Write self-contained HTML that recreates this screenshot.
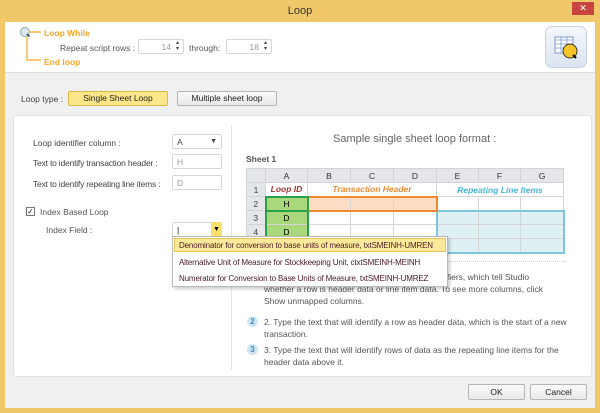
<!DOCTYPE html>
<html><head><style>
*{box-sizing:border-box;margin:0;padding:0}
body{width:600px;height:413px;background:#f0c86a;font-family:"Liberation Sans",sans-serif;font-size:8.5px;color:#444;position:relative;overflow:hidden}
.a{position:absolute;white-space:nowrap}
.w{white-space:normal}
.inp{position:absolute;background:#fff;border:1px solid #d6d6d6;border-radius:2px;color:#999;font-size:8.5px;padding:2px 4px}
.btn{position:absolute;border:1px solid #b5b5b5;border-radius:2px;background:linear-gradient(#fafafa,#e8e8e8);text-align:center;font-size:8.5px;color:#222}
table{border-collapse:collapse;position:absolute;left:246px;top:168px;font-size:8.5px}
td{border:1px solid #d4d4d4;height:14px;text-align:center;padding:0}
.h td{background:#e4e6ea;color:#333}
.n{background:#e4e6ea;width:19px}
</style></head><body>
<div class="a" style="left:0;top:0;width:600px;height:22px;text-align:center;line-height:22px;font-size:11px;color:#333">Loop</div>
<div class="a" style="left:572px;top:2px;width:22px;height:13px;background:#c7443f;color:#fff;text-align:center;font-size:9px;line-height:13px">✕</div>
<div class="a" style="left:5px;top:22px;width:590px;height:386px;background:#f0f0f0"></div>
<div class="a" style="left:5px;top:22px;width:590px;height:51px;background:#fff;border-bottom:1px solid #ddd"></div>
<svg class="a" style="left:18px;top:24px" width="30" height="40"><path d="M9 10v26h14M12 8h11" stroke="#f5a623" stroke-width="1.2" fill="none"/><circle cx="7" cy="8" r="4.5" fill="#dde6f0" stroke="#8aa" stroke-width="1"/><path d="M9 10l2.5 2.5" stroke="#333" stroke-width="1.5"/></svg>
<div class="a" style="left:44px;top:28px;color:#f5a623;font-weight:bold">Loop While</div>
<div class="a" style="left:44px;top:57px;color:#f5a623;font-weight:bold">End loop</div>
<div class="a" style="left:60px;top:43px;color:#555">Repeat script rows :</div>
<div class="inp" style="left:138px;top:39px;width:46px;height:15px;text-align:right;padding-right:12px">14</div>
<div class="a" style="left:189px;top:43px;color:#555">through:</div>
<div class="inp" style="left:226px;top:39px;width:46px;height:15px;text-align:right;padding-right:12px">18</div>
<div class="a" style="left:176px;top:40px;font-size:6px;line-height:6px">▴<br>▾</div>
<div class="a" style="left:264px;top:40px;font-size:6px;line-height:6px">▴<br>▾</div>
<div class="a" style="left:545px;top:26px;width:42px;height:42px;border:1px solid #c8d4e4;border-radius:7px;background:linear-gradient(#f4f7fb,#dbe4f0)"></div>
<svg class="a" style="left:553px;top:34px" width="28" height="28"><rect x="2" y="3" width="18" height="16" fill="#fff" stroke="#7a9ad0"/><path d="M2 6h18M2 10h18M2 14h18M8 3v16M14 3v16" stroke="#7a9ad0" stroke-width=".8"/><circle cx="17" cy="17" r="7" fill="#f7c52a" stroke="#333"/><path d="M20 21l3 3" stroke="#000" stroke-width="2"/></svg>
<div class="a" style="left:21px;top:94px;color:#444">Loop type :</div>
<div class="btn" style="left:68px;top:91px;width:100px;height:15px;line-height:13px;background:#fde78a;border-color:#d9b84a">Single Sheet Loop</div>
<div class="btn" style="left:177px;top:91px;width:100px;height:15px;line-height:13px">Multiple sheet loop</div>
<div class="a" style="left:13px;top:115px;width:579px;height:262px;background:#fff;border:1px solid #e2e2e2;border-radius:3px"></div>
<div class="a" style="left:231px;top:125px;width:1px;height:245px;background:#e4e4e4"></div>
<div class="a" style="left:33px;top:138px">Loop identifier column :</div>
<div class="inp" style="left:172px;top:134px;width:50px;height:15px;color:#444">A<span style="position:absolute;right:4px;font-size:7px;top:3px">▼</span></div>
<div class="a" style="left:33px;top:158px;letter-spacing:-.2px">Text to identify transaction header :</div>
<div class="inp" style="left:172px;top:154px;width:50px;height:15px">H</div>
<div class="a" style="left:33px;top:179px;letter-spacing:-.2px">Text to identify repeating line items :</div>
<div class="inp" style="left:172px;top:175px;width:50px;height:15px">D</div>
<div class="a" style="left:26px;top:207px;width:9px;height:9px;border:1px solid #777;font-size:8px;line-height:7px;text-align:center;color:#222">✓</div>
<div class="a" style="left:40px;top:207px;color:#555">Index Based Loop</div>
<div class="a" style="left:46px;top:225px;color:#555">Index Field :</div>
<div class="inp" style="left:172px;top:222px;width:50px;height:15px;color:#000">|</div>
<div class="a" style="left:211px;top:222px;width:11px;height:15px;background:#fbe06a;font-size:7px;text-align:center;line-height:15px;color:#000">▼</div>
<div class="a" style="left:333px;top:133px;font-size:11px;color:#666">Sample single sheet loop format :</div>
<div class="a" style="left:246px;top:154px;font-weight:bold;color:#555">Sheet 1</div>
<table>
<tr class="h"><td class="n"></td><td style="width:42px">A</td><td style="width:43px">B</td><td style="width:43px">C</td><td style="width:43px">D</td><td style="width:42px">E</td><td style="width:42px">F</td><td style="width:43px">G</td></tr>
<tr><td class="n">1</td><td style="color:#a33;font-weight:bold;font-style:italic">Loop ID</td><td colspan="3" style="color:#f08a30;font-weight:bold;font-style:italic">Transaction Header</td><td colspan="3" style="color:#4bb6d6;font-weight:bold;font-style:italic">Repeating Line Items</td></tr>
<tr><td class="n">2</td><td style="background:#a9d87c;border:2px solid #2aa048;color:#000">H</td><td style="background:#fbdcc4;border-top:2px solid #f08a30;border-bottom:2px solid #f08a30;border-left:2px solid #f08a30"></td><td style="background:#fbdcc4;border-top:2px solid #f08a30;border-bottom:2px solid #f08a30"></td><td style="background:#fbdcc4;border:2px solid #f08a30;border-left:1px solid #d4d4d4"></td><td></td><td></td><td></td></tr>
<tr><td class="n">3</td><td style="background:#a9d87c;border-left:2px solid #2aa048;border-right:2px solid #2aa048;color:#000">D</td><td></td><td></td><td></td><td style="background:#dff0f5;border-top:2px solid #7cc6d8;border-left:2px solid #7cc6d8"></td><td style="background:#dff0f5;border-top:2px solid #7cc6d8"></td><td style="background:#dff0f5;border-top:2px solid #7cc6d8;border-right:2px solid #7cc6d8"></td></tr>
<tr><td class="n">4</td><td style="background:#a9d87c;border-left:2px solid #2aa048;border-right:2px solid #2aa048;color:#000">D</td><td></td><td></td><td></td><td style="background:#dff0f5;border-left:2px solid #7cc6d8"></td><td style="background:#dff0f5"></td><td style="background:#dff0f5;border-right:2px solid #7cc6d8"></td></tr>
<tr><td class="n">5</td><td style="background:#a9d87c;border:2px solid #2aa048;border-top:1px solid #d4d4d4;color:#000">D</td><td></td><td></td><td></td><td style="background:#dff0f5;border-left:2px solid #7cc6d8;border-bottom:2px solid #7cc6d8"></td><td style="background:#dff0f5;border-bottom:2px solid #7cc6d8"></td><td style="background:#dff0f5;border-right:2px solid #7cc6d8;border-bottom:2px solid #7cc6d8"></td></tr>
</table>
<div class="a" style="left:246px;top:261px;width:320px;border-top:1px dotted #ccc"></div>
<div class="a w" style="left:264px;top:271px;width:296px;line-height:12px;color:#555">1. Select the column that contains the loop identifiers, which tell Studio whether a row is header data or line item data. To see more columns, click Show unmapped columns.</div>
<div class="a" style="left:247px;top:316px;width:11px;height:11px;border-radius:6px;background:#cfe6f2;color:#3a8fc0;font-size:8px;text-align:center;line-height:11px;font-weight:bold">2</div>
<div class="a w" style="left:264px;top:316px;width:305px;line-height:12px;color:#555">2. Type the text that will identify a row as header data, which is the start of a new transaction.</div>
<div class="a" style="left:247px;top:344px;width:11px;height:11px;border-radius:6px;background:#cfe6f2;color:#3a8fc0;font-size:8px;text-align:center;line-height:11px;font-weight:bold">3</div>
<div class="a w" style="left:264px;top:344px;width:305px;line-height:12px;color:#555">3. Type the text that will identify rows of data as the repeating line items for the header data above it.</div>
<div class="a" style="left:172px;top:236px;width:276px;height:51px;background:#fff;border:1px solid #bbb;box-shadow:2px 2px 3px rgba(0,0,0,.2)"></div>
<div class="a" style="left:174px;top:238px;width:272px;height:14px;background:#fde99a;border:1px solid #e6c45a"></div>
<div class="a" style="left:179px;top:241px;color:#4a1a2a;font-size:8px;letter-spacing:-.15px">Denominator for conversion to base units of measure, txtSMEINH-UMREN</div>
<div class="a" style="left:179px;top:258px;color:#4a1a2a;font-size:8px;letter-spacing:-.15px">Alternative Unit of Measure for Stockkeeping Unit, ctxtSMEINH-MEINH</div>
<div class="a" style="left:179px;top:274px;color:#4a1a2a;font-size:8px;letter-spacing:-.15px">Numerator for Conversion to Base Units of Measure, txtSMEINH-UMREZ</div>
<div class="btn" style="left:468px;top:384px;width:57px;height:16px;line-height:14px">OK</div>
<div class="btn" style="left:530px;top:384px;width:57px;height:16px;line-height:14px">Cancel</div>
</body></html>
